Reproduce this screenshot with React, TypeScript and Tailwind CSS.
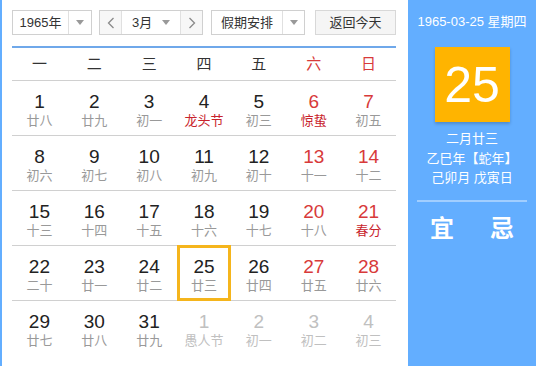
const font = { fontFamily: '"Liberation Sans", "Noto Sans CJK SC", sans-serif' };

type Day = { d: number; l: string; red?: boolean; festival?: boolean; faded?: boolean; today?: boolean };

const weeks: Day[][] = [
  [
    { d: 1, l: '廿八' },
    { d: 2, l: '廿九' },
    { d: 3, l: '初一' },
    { d: 4, l: '龙头节', festival: true },
    { d: 5, l: '初三' },
    { d: 6, l: '惊蛰', red: true, festival: true },
    { d: 7, l: '初五', red: true },
  ],
  [
    { d: 8, l: '初六' },
    { d: 9, l: '初七' },
    { d: 10, l: '初八' },
    { d: 11, l: '初九' },
    { d: 12, l: '初十' },
    { d: 13, l: '十一', red: true },
    { d: 14, l: '十二', red: true },
  ],
  [
    { d: 15, l: '十三' },
    { d: 16, l: '十四' },
    { d: 17, l: '十五' },
    { d: 18, l: '十六' },
    { d: 19, l: '十七' },
    { d: 20, l: '十八', red: true },
    { d: 21, l: '春分', red: true, festival: true },
  ],
  [
    { d: 22, l: '二十' },
    { d: 23, l: '廿一' },
    { d: 24, l: '廿二' },
    { d: 25, l: '廿三', today: true },
    { d: 26, l: '廿四' },
    { d: 27, l: '廿五', red: true },
    { d: 28, l: '廿六', red: true },
  ],
  [
    { d: 29, l: '廿七' },
    { d: 30, l: '廿八' },
    { d: 31, l: '廿九' },
    { d: 1, l: '愚人节', faded: true },
    { d: 2, l: '初一', faded: true },
    { d: 3, l: '初二', faded: true },
    { d: 4, l: '初三', faded: true },
  ],
];

const weekdays = ['一', '二', '三', '四', '五', '六', '日'];

function Caret() {
  return <span className="w-0 h-0 border-l-[4px] border-r-[4px] border-t-[5px] border-l-transparent border-r-transparent border-t-[#999]" />;
}

function Chevron({ dir }: { dir: 'left' | 'right' }) {
  return (
    <svg width="8" height="12" viewBox="0 0 8 12" fill="none" stroke="#8a8a8a" strokeWidth="1.3">
      {dir === 'left' ? <path d="M6.5 1 L1.5 6 L6.5 11" /> : <path d="M1.5 1 L6.5 6 L1.5 11" />}
    </svg>
  );
}

export default function App() {
  return (
    <div className="w-[536px] h-[366px] flex bg-white overflow-hidden text-[#333]" style={font}>
      <div className="w-[2px] bg-[#63aeff]" />

      <div className="w-[406px] pl-[10px] pr-[12px]">
        <div className="flex items-center mt-[10px] h-[25px] text-[13px]">
          <div className="flex w-[80px] h-full border border-[#d0d0d0] bg-white">
            <div className="w-[55px] flex items-center justify-center">1965年</div>
            <div className="flex-1 border-l border-[#e0e0e0] flex items-center justify-center">
              <Caret />
            </div>
          </div>

          <div className="flex w-[104px] h-full ml-[7px] border border-[#d0d0d0] bg-white">
            <div className="w-[22px] flex items-center justify-center bg-[#f7f7f7] border-r border-[#e0e0e0]">
              <Chevron dir="left" />
            </div>
            <div className="flex-1 flex items-center justify-between px-[10px]">
              <span>3月</span>
              <Caret />
            </div>
            <div className="w-[22px] flex items-center justify-center bg-[#f7f7f7] border-l border-[#e0e0e0]">
              <Chevron dir="right" />
            </div>
          </div>

          <div className="flex w-[94px] h-full ml-[8px] border border-[#d0d0d0] bg-white">
            <div className="w-[70px] flex items-center justify-center">假期安排</div>
            <div className="flex-1 border-l border-[#e0e0e0] flex items-center justify-center">
              <Caret />
            </div>
          </div>

          <div className="w-[81px] h-full ml-[10px] border border-[#d8d8d8] bg-[#f5f5f5] flex items-center justify-center">
            返回今天
          </div>
        </div>

        <div className="mt-[11px] h-[2px] bg-[#6fa8ea]" />

        <div className="grid grid-cols-7 h-[33px] border-b border-[#d0d0d0] text-[15px]">
          {weekdays.map((w, i) => (
            <div key={w} className={`flex items-center justify-center ${i >= 5 ? 'text-[#d83a3a]' : 'text-[#333]'}`}>
              {w}
            </div>
          ))}
        </div>

        {weeks.map((week, wi) => (
          <div key={wi} className={`grid grid-cols-7 h-[55px] ${wi < weeks.length - 1 ? 'border-b border-[#d0d0d0]' : ''}`}>
            {week.map((day, di) => {
              const numColor = day.faded ? 'text-[#c0c0c0]' : day.red ? 'text-[#d83a3a]' : 'text-[#222]';
              const lunarColor = day.faded ? 'text-[#c0c0c0]' : day.festival ? 'text-[#c8232c]' : 'text-[#999]';
              return (
                <div key={di} className="flex items-center justify-center">
                  <div
                    className={`flex flex-col items-center ${
                      day.today ? 'w-[54px] h-[56px] -mt-[1px] pt-[8px] border-[3px] border-[#f5b51c]' : 'w-full h-full pt-[10px]'
                    }`}
                  >
                    <span className={`text-[19px] leading-[21px] ${numColor}`}>{day.d}</span>
                    <span className={`text-[13px] leading-[17px] ${lunarColor}`}>{day.l}</span>
                  </div>
                </div>
              );
            })}
          </div>
        ))}
      </div>

      <div className="flex-1 bg-[#63aeff] text-white flex flex-col items-center">
        <div className="mt-[14px] text-[13px] leading-[16px]">1965-03-25 星期四</div>
        <div className="mt-[17px] w-[75px] h-[75px] bg-[#ffb400] shadow-[0_2px_3px_rgba(0,0,0,0.2)] flex items-center justify-center text-[50px] leading-none">
          25
        </div>
        <div className="mt-[7px] text-[13px] leading-[19.5px] flex flex-col items-center">
          <span>二月廿三</span>
          <span>乙巳年【蛇年】</span>
          <span>己卯月 戊寅日</span>
        </div>
        <div className="mt-[12px] w-[110px] h-[2px] bg-white/40" />
        <div className="mt-[13px] flex gap-[36px] text-[24px] leading-[28px] font-bold">
          <span>宜</span>
          <span>忌</span>
        </div>
      </div>
    </div>
  );
}
